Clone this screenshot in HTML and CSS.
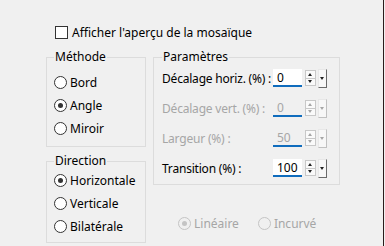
FILE: index.html
```html
<!DOCTYPE html>
<html>
<head>
  <meta charset="UTF-8">
  <title>Mosaïque</title>
  <link rel="stylesheet" href="styles.css">
</head>
<body>
  <div class="dialog">
    <label class="check">
      <span class="box"></span>
      Afficher l'aperçu de la mosaïque
    </label>

    <div class="columns">
      <div class="left">
        <fieldset class="group methode">
          <legend>Méthode</legend>
          <div class="radio"><span class="dot"></span>Bord</div>
          <div class="radio"><span class="dot on"></span>Angle</div>
          <div class="radio"><span class="dot"></span>Miroir</div>
        </fieldset>
        <fieldset class="group direction">
          <legend>Direction</legend>
          <div class="radio"><span class="dot on"></span>Horizontale</div>
          <div class="radio"><span class="dot"></span>Verticale</div>
          <div class="radio"><span class="dot"></span>Bilatérale</div>
        </fieldset>
      </div>

      <div class="right">
        <fieldset class="group params">
          <legend>Paramètres</legend>
          <div class="row">
            <span class="lbl">Décalage horiz. (%) :</span>
            <span class="spin"><span class="val">0</span></span>
            <span class="arrows"><i class="up"></i><i class="down"></i></span>
            <span class="drop"><i></i></span>
          </div>
          <div class="row off">
            <span class="lbl">Décalage vert. (%) :</span>
            <span class="spin"><span class="val">0</span></span>
            <span class="arrows"><i class="up"></i><i class="down"></i></span>
            <span class="drop"><i></i></span>
          </div>
          <div class="row off">
            <span class="lbl">Largeur (%) :</span>
            <span class="spin"><span class="val">50</span></span>
            <span class="arrows"><i class="up"></i><i class="down"></i></span>
            <span class="drop"><i></i></span>
          </div>
          <div class="row">
            <span class="lbl">Transition (%) :</span>
            <span class="spin"><span class="val">100</span></span>
            <span class="arrows"><i class="up"></i><i class="down"></i></span>
            <span class="drop"><i></i></span>
          </div>
        </fieldset>

        <div class="shape">
          <div class="radio off"><span class="dot on"></span>Linéaire</div>
          <div class="radio off"><span class="dot"></span>Incurvé</div>
        </div>
      </div>
    </div>
  </div>
</body>
</html>
```

FILE: styles.css
```css
html, body {
  margin: 0;
  padding: 0;
}

body {
  width: 385px;
  height: 246px;
  background-color: #f0f0f0;
  font-family: "Noto Sans", "Open Sans", sans-serif;
  font-size: 12px;
  color: #000;
  overflow: hidden;
}

.dialog {
  width: 384px;
  height: 246px;
  border-right: 1px solid #2b1c1c;
  padding-top: 26px;
  box-sizing: border-box;
}

.check {
  display: flex;
  align-items: center;
  height: 13px;
  margin-left: 55px;
  line-height: 13px;
}

.check .box {
  width: 11px;
  height: 11px;
  border: 1px solid #333;
  background: #fff;
  margin-right: 4px;
}

.columns {
  display: flex;
  margin-top: 10px;
  margin-left: 46px;
}

.left {
  width: 100px;
  display: flex;
  flex-direction: column;
  gap: 6px;
}

.right {
  width: 187px;
  margin-left: 7px;
}

.group {
  margin: 0;
  border: 1px solid #dcdcdc;
  padding: 0 0 0 7px;
  min-width: 0;
}

.group legend {
  padding: 0 1px;
  margin-left: 0;
  line-height: 16px;
  height: 16px;
}

.methode {
  height: 98px;
  box-sizing: border-box;
}

.direction {
  height: 90px;
  box-sizing: border-box;
}

.methode .radio:first-of-type {
  margin-top: 11px;
}

.direction .radio:first-of-type {
  margin-top: 5px;
}

.radio {
  display: flex;
  align-items: center;
  height: 13px;
  line-height: 13px;
  margin-bottom: 10px;
}

.dot {
  width: 11px;
  height: 11px;
  border: 1px solid #333;
  border-radius: 50%;
  background: #fff;
  margin-right: 3px;
  position: relative;
  flex: none;
}

.dot.on::after {
  content: "";
  position: absolute;
  left: 3px;
  top: 3px;
  width: 5px;
  height: 5px;
  border-radius: 50%;
  background: #333;
}

.radio.off {
  color: #a6a6a6;
}

.radio.off .dot {
  border-color: #c4c4c4;
  background: #f0f0f0;
}

.radio.off .dot.on::after {
  background: #c4c4c4;
}

.params {
  height: 136px;
  box-sizing: border-box;
  padding-left: 8px;
}

.row {
  display: flex;
  align-items: center;
  height: 18px;
  margin-bottom: 12px;
}

.row:first-of-type {
  margin-top: 4px;
}

.lbl {
  width: 111px;
  flex: none;
  white-space: nowrap;
  letter-spacing: -0.2px;
}

.spin {
  flex: none;
  width: 29px;
  height: 18px;
  background: #fff;
  border-bottom: 2px solid #0f6cbd;
  box-sizing: border-box;
  padding-left: 4px;
  line-height: 18px;
}

.arrows {
  flex: none;
  display: flex;
  flex-direction: column;
  margin-left: 3px;
  width: 9px;
  height: 14px;
  border: 1px solid #c8c8c8;
  background: #fafafa;
}

.arrows i {
  flex: 1;
  position: relative;
}

.arrows .up {
  border-bottom: 1px solid #c8c8c8;
}

.arrows i::after {
  content: "";
  position: absolute;
  left: 2px;
  top: 2px;
  border-left: 2.5px solid transparent;
  border-right: 2.5px solid transparent;
}

.arrows .up::after {
  border-bottom: 3px solid #222;
}

.arrows .down::after {
  top: 1px;
  border-top: 3px solid #222;
}

.drop {
  flex: none;
  width: 7px;
  height: 17px;
  margin-left: 2px;
  background: #f7f7f7;
  border-top: 1px solid #e8e8e8;
  border-left: 1px solid #e8e8e8;
  border-right: 1px solid #6a6a6a;
  border-bottom: 1px solid #6a6a6a;
  position: relative;
}

.drop i {
  position: absolute;
  left: 1px;
  top: 7px;
  border-left: 2.5px solid transparent;
  border-right: 2.5px solid transparent;
  border-top: 3px solid #222;
}

.row.off .lbl,
.row.off .val {
  color: #a6a6a6;
}

.row.off .spin {
  background: #f0f0f0;
}

.row.off .arrows i::after {
  border-bottom-color: #a6a6a6;
  border-top-color: #a6a6a6;
}

.row.off .drop i {
  border-top-color: #a6a6a6;
}

.row.off .drop {
  border-right-color: #c0c0c0;
  border-bottom-color: #c0c0c0;
}

.shape {
  display: flex;
  gap: 19px;
  margin-top: 32px;
  margin-left: 25px;
}

.shape .radio {
  margin-bottom: 0;
}
```
